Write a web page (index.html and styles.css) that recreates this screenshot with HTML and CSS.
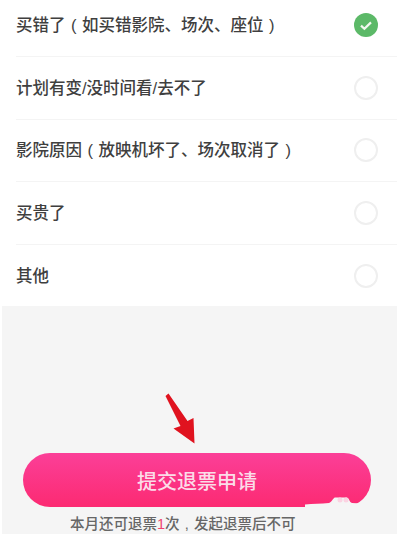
FILE: index.html
```html
<!DOCTYPE html>
<html lang="zh-CN">

<head>
    <meta charset="UTF-8">
    <meta name="viewport" content="width=device-width, initial-scale=1.0">
    <title>退票原因</title>
    <link rel="stylesheet" href="styles.css">
</head>

<body>
    <div class="reason-list">
        <div class="reason first">
            <span class="reason-text">买错了<span class="punct">(</span>如买错影院、场次、座位<span class="punct">)</span></span>
            <svg class="check" viewBox="0 0 24 24">
                <circle cx="12" cy="12" r="12" fill="#5cb968"/>
                <path d="M7 12.6l3.4 3.2L17 9.4" fill="none" stroke="#f2f8f0" stroke-width="2.2"/>
            </svg>
        </div>
        <div class="reason">
            <span class="reason-text">计划有变/没时间看/去不了</span>
            <span class="radio"></span>
        </div>
        <div class="reason">
            <span class="reason-text">影院原因<span class="punct">(</span>放映机坏了、场次取消了<span class="punct">)</span></span>
            <span class="radio"></span>
        </div>
        <div class="reason">
            <span class="reason-text">买贵了</span>
            <span class="radio"></span>
        </div>
        <div class="reason last">
            <span class="reason-text">其他</span>
            <span class="radio"></span>
        </div>
    </div>

    <div class="footer">
        <!-- red arrow pointing at the button -->
        <svg class="arrow" viewBox="0 0 60 65">
            <path d="M15.5 11L18.5 8.5L37.500 36L43.500 33L44.500 58.500L23.500 43.500L30.500 41Z" fill="#e0131f"/>
        </svg>
        <button class="submit-btn">提交退票申请</button>
        <!-- watermark smudge over the button corner -->
        <svg class="smudge" viewBox="0 0 60 14">
            <path d="M0 14V10.500C8 9.500 16 10 24 9C27 8 28 4 30 3.500H42C45 5 44 8 47 9L56 9.500L60 14Z" fill="#f5f5f5"/>
            <circle cx="35" cy="6" r="2.500" fill="#fbd3e2"/>
            <circle cx="41" cy="6" r="2.500" fill="#fbd3e2"/>
        </svg>
        <p class="note">本月还可退票<span class="count">1</span>次<span class="punct">,</span>发起退票后不可</p>
    </div>
</body>

</html>
```

FILE: styles.css
```css
body {
    margin: 0;
    height: 534px;
    overflow: hidden;
    background-color: #fff;
    font-family: "Liberation Sans", "Noto Sans CJK SC", sans-serif;
    color: #333;
}

.reason-list {
    margin: 0 3px 0 2px;
    padding-left: 14px;
    height: 306px;
    box-sizing: border-box;
}

.reason {
    display: flex;
    justify-content: space-between;
    align-items: center;
    height: 62.5px;
    box-sizing: border-box;
    padding-right: 19px;
    border-bottom: 1px solid #f4f4f4;
}

.reason.first {
    height: 57px;
    padding-bottom: 6px;
}

.reason.last {
    border-bottom: none;
}

.reason-text {
    font-size: 16.5px;
    font-weight: 500;
    line-height: 22px;
    color: #3f3f3f;
}

/* full-width brackets and commas sit centred in their cell here */
.punct {
    display: inline-block;
    width: 1em;
    text-align: center;
}

.check {
    width: 24px;
    height: 24px;
}

.radio {
    width: 20px;
    height: 20px;
    border: 2px solid #efefef;
    border-radius: 50%;
}

.footer {
    position: relative;
    margin: 0 3px 0 2px;
    height: 228px;
    background-color: #f5f5f5;
    display: flex;
    flex-direction: column;
    align-items: flex-start;
    padding: 147px 0 0 21px;
    box-sizing: border-box;
}

.arrow {
    position: absolute;
    left: 148px;
    top: 79px;
    width: 60px;
    height: 65px;
}

.submit-btn {
    width: 348px;
    height: 54px;
    flex: none;
    border: none;
    border-radius: 27px;
    background: linear-gradient(#fb3f98, #fc2a72);
    color: #fbdce8;
    font-family: inherit;
    font-size: 20px;
    font-weight: 500;
}

.smudge {
    position: absolute;
    left: 303px;
    top: 188px;
    width: 60px;
    height: 14px;
}

.note {
    margin: 8px 0 0 47px;
    font-size: 14.5px;
    font-weight: 500;
    line-height: 18px;
    color: #666;
    white-space: nowrap;
}

.count {
    color: #f0436f;
}
```
